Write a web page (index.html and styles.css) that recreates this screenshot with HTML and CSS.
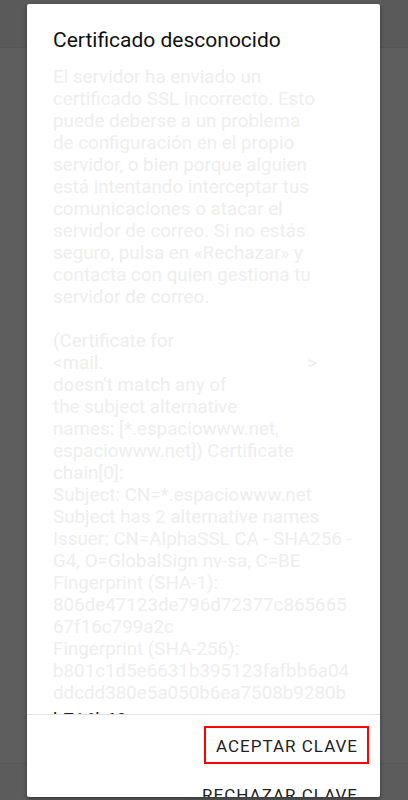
FILE: index.html
```html
<!DOCTYPE html>
<html lang="es">
<head>
  <meta charset="UTF-8">
  <title>Certificado desconocido</title>
  <link rel="stylesheet" href="styles.css">
</head>
<body>
  <div class="fondo">
    <div class="barra"></div>
    <div class="contenido"></div>
    <div class="pie"></div>
  </div>

  <div class="dialogo">
    <h2 class="titulo">Certificado desconocido</h2>

    <div class="mensaje">
      <p>
        El servidor ha enviado un<br>
        certificado SSL incorrecto. Esto<br>
        puede deberse a un problema<br>
        de configuración en el propio<br>
        servidor, o bien porque alguien<br>
        está intentando interceptar tus<br>
        comunicaciones o atacar el<br>
        servidor de correo. Si no estás<br>
        seguro, pulsa en «Rechazar» y<br>
        contacta con quien gestiona tu<br>
        servidor de correo.<br>
        <br>
        (Certificate for<br>
        &lt;mail.<span class="oculto"></span>&gt;<br>
        doesn't match any of<br>
        the subject alternative<br>
        names: [*.espaciowww.net,<br>
        espaciowww.net]) Certificate<br>
        chain[0]:<br>
        Subject: CN=*.espaciowww.net<br>
        Subject has 2 alternative names<br>
        Issuer: CN=AlphaSSL CA - SHA256 -<br>
        G4, O=GlobalSign nv-sa, C=BE<br>
        Fingerprint (SHA-1):<br>
        806de47123de796d72377c865665<br>
        67f16c799a2c<br>
        Fingerprint (SHA-256):<br>
        b801c1d5e6631b395123fafbb6a04<br>
        ddcdd380e5a050b6ea7508b9280b
      </p>
      <div class="cortado">b716b68x</div>
    </div>

    <div class="botones">
      <button class="boton marcado">Aceptar clave</button>
      <button class="boton">Rechazar clave</button>
    </div>
  </div>
</body>
</html>
```

FILE: styles.css
```css
body {
  margin: 0;
  height: 800px;
  overflow: hidden;
  font-family: Roboto, "Noto Sans", sans-serif;
  background-color: #5e5e5e;
}

/* pantalla de fondo oscurecida */
.fondo {
  display: flex;
  flex-direction: column;
  height: 800px;
}

.barra {
  height: 47px;
  background-color: #5a5a5a;
  border-bottom: 1px solid #555;
}

.contenido {
  flex: 1;
}

.pie {
  height: 36px;
  background-color: #5c5c5c;
  border-top: 1px solid #555;
}

/* dialogo */
.dialogo {
  position: absolute;
  top: 4px;
  left: 27px;
  width: 353px;
  height: 793px;
  display: flex;
  flex-direction: column;
  overflow: hidden;
  background-color: #fff;
  border-radius: 2px;
  box-shadow: 0 2px 4px rgba(0, 0, 0, 0.4);
}

.titulo {
  margin: 0;
  padding: 24px 26px 14px 26px;
  font-size: 21px;
  font-weight: 400;
  line-height: 24px;
  color: #111;
}

.mensaje {
  flex: 1;
  overflow: hidden;
  padding: 0 26px;
  border-bottom: 1px solid #e3e3e3;
}

.mensaje p {
  margin: 0;
  font-size: 18.8px;
  line-height: 22px;
  color: #eeeeee;
  white-space: nowrap;
}

.oculto {
  display: inline-block;
  width: 204px;
}

/* ultima linea, casi oculta por el borde */
.cortado {
  margin-top: 5px;
  font-size: 18.8px;
  line-height: 22px;
  color: #222;
}

.botones {
  display: flex;
  flex-direction: column;
  align-items: flex-end;
  gap: 11px;
  padding: 11px 11px 0 0;
  height: 71px;
}

.boton {
  background: none;
  border: 2px solid transparent;
  padding: 8px 9px 6px 10px;
  font-family: Roboto, "Noto Sans", sans-serif;
  font-size: 17px;
  font-weight: 400;
  line-height: 20px;
  letter-spacing: 1px;
  text-transform: uppercase;
  color: #222;
  cursor: pointer;
}

.marcado {
  border-color: #ff0000;
}
```
